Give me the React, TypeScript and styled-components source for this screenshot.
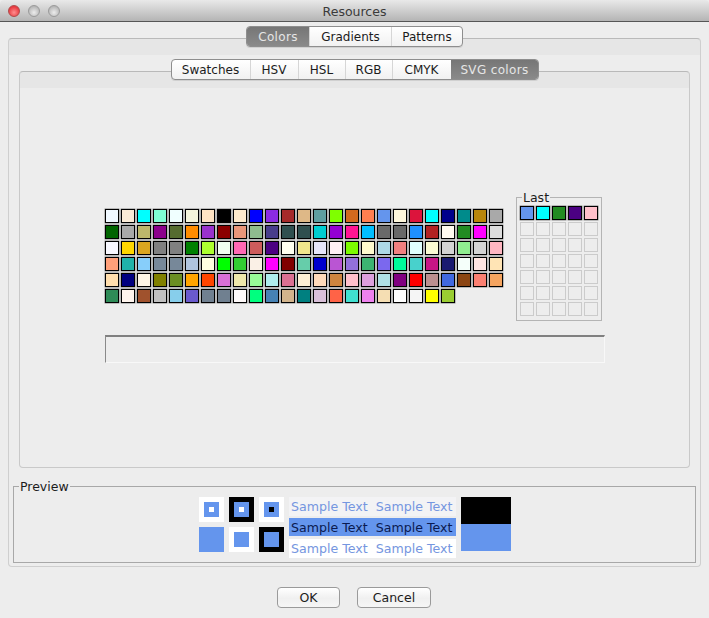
import React from 'react';
import styled, { createGlobalStyle } from 'styled-components';

const svgColors = [
  'aliceblue', 'antiquewhite', 'aqua', 'aquamarine', 'azure', 'beige', 'bisque', 'black', 'blanchedalmond', 'blue', 'blueviolet', 'brown', 'burlywood', 'cadetblue', 'chartreuse', 'chocolate', 'coral', 'cornflowerblue', 'cornsilk', 'crimson', 'cyan', 'darkblue', 'darkcyan', 'darkgoldenrod', 'darkgray',
  'darkgreen', 'darkgrey', 'darkkhaki', 'darkmagenta', 'darkolivegreen', 'darkorange', 'darkorchid', 'darkred', 'darksalmon', 'darkseagreen', 'darkslateblue', 'darkslategray', 'darkslategrey', 'darkturquoise', 'darkviolet', 'deeppink', 'deepskyblue', 'dimgray', 'dimgrey', 'dodgerblue', 'firebrick', 'floralwhite', 'forestgreen', 'fuchsia', 'gainsboro',
  'ghostwhite', 'gold', 'goldenrod', 'gray', 'grey', 'green', 'greenyellow', 'honeydew', 'hotpink', 'indianred', 'indigo', 'ivory', 'khaki', 'lavender', 'lavenderblush', 'lawngreen', 'lemonchiffon', 'lightblue', 'lightcoral', 'lightcyan', 'lightgoldenrodyellow', 'lightgray', 'lightgreen', 'lightgrey', 'lightpink',
  'lightsalmon', 'lightseagreen', 'lightskyblue', 'lightslategray', 'lightslategrey', 'lightsteelblue', 'lightyellow', 'lime', 'limegreen', 'linen', 'magenta', 'maroon', 'mediumaquamarine', 'mediumblue', 'mediumorchid', 'mediumpurple', 'mediumseagreen', 'mediumslateblue', 'mediumspringgreen', 'mediumturquoise', 'mediumvioletred', 'midnightblue', 'mintcream', 'mistyrose', 'moccasin',
  'navajowhite', 'navy', 'oldlace', 'olive', 'olivedrab', 'orange', 'orangered', 'orchid', 'palegoldenrod', 'palegreen', 'paleturquoise', 'palevioletred', 'papayawhip', 'peachpuff', 'peru', 'pink', 'plum', 'powderblue', 'purple', 'red', 'rosybrown', 'royalblue', 'saddlebrown', 'salmon', 'sandybrown',
  'seagreen', 'seashell', 'sienna', 'silver', 'skyblue', 'slateblue', 'slategray', 'slategrey', 'snow', 'springgreen', 'steelblue', 'tan', 'teal', 'thistle', 'tomato', 'turquoise', 'violet', 'wheat', 'white', 'whitesmoke', 'yellow', 'yellowgreen',
];

const lastColors = ['cornflowerblue', 'aqua', 'forestgreen', 'indigo', 'pink'];

const blue = '#6495ed';

const GlobalStyle = createGlobalStyle`
  html, body { margin: 0; padding: 0; background: #ededed; }
  body { font-family: "DejaVu Sans", "Liberation Sans", sans-serif; font-size: 13px; color: #1c1c1c; }
`;

const Window = styled.div`
  width: 709px;
  height: 618px;
  display: flex;
  flex-direction: column;
  background: #ededed;
  overflow: hidden;
`;

const TitleBar = styled.div`
  height: 22px;
  box-sizing: border-box;
  flex: none;
  display: flex;
  align-items: center;
  padding-left: 8px;
  gap: 8px;
  position: relative;
  background: linear-gradient(#e9e9e9, #b4b4b4);
  border-bottom: 1px solid #565656;
  border-radius: 4px 4px 0 0;
`;

const Light = styled.span<{ $red?: boolean }>`
  width: 12px;
  height: 12px;
  border-radius: 50%;
  box-sizing: border-box;
  border: 1px solid ${({ $red }) => ($red ? '#b04a4a' : '#9a9a9a')};
  background: ${({ $red }) =>
    $red
      ? 'radial-gradient(circle at 50% 65%, #ff8f8f, #e8393f 70%)'
      : 'radial-gradient(circle at 50% 65%, #ececec, #b5b5b5 75%)'};
`;

const Title = styled.div`
  position: absolute;
  left: 0;
  right: 0;
  top: 4px;
  text-align: center;
  font-size: 12.5px;
  line-height: 16px;
  color: #3a3a3a;
`;

const Body = styled.div`
  flex: 1;
  display: flex;
  flex-direction: column;
  padding: 4px 8px 0;
`;

const Segments = styled.div`
  align-self: center;
  display: flex;
  height: 21px;
  box-sizing: border-box;
  position: relative;
  z-index: 1;
  border: 1px solid #8e8e8e;
  border-radius: 4px;
  background: linear-gradient(#ffffff, #f1f1f1);
  overflow: hidden;
  box-shadow: 0 1px 0 #d0d0d0;
`;

const Segment = styled.div<{ $width: number; $active?: boolean }>`
  width: ${({ $width }) => $width}px;
  box-sizing: border-box;
  display: flex;
  align-items: center;
  justify-content: center;
  font-size: 12px;
  letter-spacing: ${({ $active }) => ($active ? '0.35px' : '0')};
  color: ${({ $active }) => ($active ? '#e6e6e6' : '#1c1c1c')};
  background: ${({ $active }) => ($active ? 'linear-gradient(#767676, #8a8a8a)' : 'transparent')};
  border-left: 1px solid ${({ $active }) => ($active ? 'transparent' : '#d6d6d6')};
  &:first-child { border-left: none; }
`;

const OuterPane = styled.div`
  height: 529px;
  margin-top: -9px;
  box-sizing: border-box;
  display: flex;
  flex-direction: column;
  padding: 20px 4px 0;
  border: 1px solid #cfcfcf;
  border-top-color: #b9b9b9;
  border-radius: 4px;
  background: linear-gradient(#e6e6e6 16px, #ededed 16px);
`;

const InnerPane = styled.div`
  height: 397px;
  margin: -9px 6px 0;
  flex: none;
  box-sizing: border-box;
  border: 1px solid #c9c9c9;
  border-top-color: #b9b9b9;
  border-radius: 4px;
  background: linear-gradient(#e6e6e6 16px, #ededed 16px);
`;

const Picker = styled.div`
  display: flex;
  flex-direction: column;
  padding: 118px 0 0 85px;
`;

const PickerRow = styled.div`
  display: flex;
  align-items: flex-start;
  gap: 11px;
`;

const SwatchGrid = styled.div<{ $cols: number }>`
  display: grid;
  grid-template-columns: repeat(${({ $cols }) => $cols}, 14px);
  grid-auto-rows: 14px;
  gap: 2px;
`;

const PaletteGrid = styled(SwatchGrid)`
  width: 400px;
  margin-top: 19px;
`;

const LastGrid = styled(SwatchGrid)`
  margin: 1px 0 0 3px;
`;

const Swatch = styled.div`
  box-sizing: border-box;
  border: 1px solid #000;
  box-shadow: 0 0 0 0.4px rgba(0, 0, 0, 0.55);
`;

const EmptySwatch = styled.div`
  box-sizing: border-box;
  border: 1px solid #cbcbcb;
`;

const LastBox = styled.fieldset`
  margin: -1px 0 0;
  width: 86px;
  height: 132px;
  box-sizing: border-box;
  padding: 0;
  border: 1px solid #b4b4b4;
`;

const Legend = styled.legend`
  padding: 2px 1px 0;
  margin-left: 5px;
  font-size: 12.5px;
  line-height: 14px;
`;

const ValueField = styled.div`
  width: 500px;
  height: 28px;
  margin-top: 14px;
  box-sizing: border-box;
  border-top: 2px solid #808080;
  border-left: 1px solid #8a8a8a;
  border-right: 1px solid #f8f8f8;
  border-bottom: 1px solid #f8f8f8;
`;

const PreviewBox = styled.fieldset`
  margin: 10px 0 0;
  height: 85px;
  box-sizing: border-box;
  padding: 0;
  border: 1px solid #a8a8a8;
`;

const PreviewRow = styled.div`
  display: flex;
  gap: 5px;
  padding: 3px 0 0 185px;
`;

const ChipGrid = styled.div`
  display: grid;
  grid-template-columns: repeat(3, 25px);
  grid-auto-rows: 25px;
  gap: 5px;
`;

const Chip = styled.div<{ $frame: string }>`
  box-sizing: border-box;
  padding: 5px;
  background: ${({ $frame }) => $frame};
  display: flex;
`;

const ChipFill = styled.div<{ $fill: string }>`
  flex: 1;
  padding: 5px;
  background: ${({ $fill }) => $fill};
  display: flex;
`;

const ChipDot = styled.div<{ $dot: string }>`
  flex: 1;
  background: ${({ $dot }) => $dot};
`;

const SampleTable = styled.div`
  display: flex;
  flex-direction: column;
  width: 167px;
`;

const SampleRow = styled.div<{ $bg: string; $color: string; $height: number; $gap: number }>`
  height: ${({ $height }) => $height}px;
  margin-bottom: ${({ $gap }) => $gap}px;
  display: flex;
  align-items: center;
  gap: 8px;
  padding: 0 0 0 2px;
  font-size: 12.6px;
  color: ${({ $color }) => $color};
  background: ${({ $bg }) => $bg};
`;

const Pair = styled.div`
  width: 50px;
  display: flex;
  flex-direction: column;
`;

const PairTop = styled.div`
  height: 27px;
  background: #000;
`;

const PairBottom = styled.div`
  height: 27px;
  background: ${blue};
`;

const Footer = styled.div`
  display: flex;
  gap: 17px;
  padding: 20px 0 0 269px;
`;

const Button = styled.button<{ $width: number }>`
  width: ${({ $width }) => $width}px;
  height: 21px;
  padding: 0;
  box-sizing: border-box;
  border: 1px solid #9a9a9a;
  border-radius: 4px;
  background: linear-gradient(#ffffff, #f0f0f0 55%, #f6f6f6);
  font-family: inherit;
  font-size: 12.5px;
  color: #1c1c1c;
`;

const chips = [
  { frame: '#fff', fill: blue, dot: '#fff' },
  { frame: '#000', fill: blue, dot: '#fff' },
  { frame: '#fff', fill: blue, dot: '#000' },
  { frame: blue, fill: blue, dot: blue },
  { frame: '#fff', fill: blue, dot: blue },
  { frame: '#000', fill: blue, dot: blue },
];

const samples = [
  { bg: '#f3f3f5', color: '#7596e0', height: 19, gap: 2 },
  { bg: blue, color: '#0a1a50', height: 18, gap: 3 },
  { bg: '#ffffff', color: '#7596e0', height: 19, gap: 0 },
];

export default function App() {
  return (
    <>
      <GlobalStyle />
      <Window>
        <TitleBar>
          <Light $red />
          <Light />
          <Light />
          <Title>Resources</Title>
        </TitleBar>
        <Body>
          <Segments>
            <Segment $width={62} $active>Colors</Segment>
            <Segment $width={82}>Gradients</Segment>
            <Segment $width={71}>Patterns</Segment>
          </Segments>
          <OuterPane>
            <Segments>
              <Segment $width={78}>Swatches</Segment>
              <Segment $width={48}>HSV</Segment>
              <Segment $width={47}>HSL</Segment>
              <Segment $width={47}>RGB</Segment>
              <Segment $width={59}>CMYK</Segment>
              <Segment $width={87} $active>SVG colors</Segment>
            </Segments>
            <InnerPane>
              <Picker>
                <PickerRow>
                  <PaletteGrid $cols={25}>
                    {svgColors.map((c) => (
                      <Swatch key={c} style={{ background: c }} />
                    ))}
                  </PaletteGrid>
                  <LastBox>
                    <Legend>Last</Legend>
                    <LastGrid $cols={5}>
                      {lastColors.map((c) => (
                        <Swatch key={c} style={{ background: c }} />
                      ))}
                      {Array.from({ length: 30 }, (_, i) => (
                        <EmptySwatch key={i} />
                      ))}
                    </LastGrid>
                  </LastBox>
                </PickerRow>
                <ValueField />
              </Picker>
            </InnerPane>
            <PreviewBox>
              <Legend>Preview</Legend>
              <PreviewRow>
                <ChipGrid>
                  {chips.map((c, i) => (
                    <Chip key={i} $frame={c.frame}>
                      <ChipFill $fill={c.fill}>
                        <ChipDot $dot={c.dot} />
                      </ChipFill>
                    </Chip>
                  ))}
                </ChipGrid>
                <SampleTable>
                  {samples.map((s, i) => (
                    <SampleRow key={i} $bg={s.bg} $color={s.color} $height={s.height} $gap={s.gap}>
                      <span>Sample Text</span>
                      <span>Sample Text</span>
                    </SampleRow>
                  ))}
                </SampleTable>
                <Pair>
                  <PairTop />
                  <PairBottom />
                </Pair>
              </PreviewRow>
            </PreviewBox>
          </OuterPane>
          <Footer>
            <Button $width={63}>OK</Button>
            <Button $width={74}>Cancel</Button>
          </Footer>
        </Body>
      </Window>
    </>
  );
}
